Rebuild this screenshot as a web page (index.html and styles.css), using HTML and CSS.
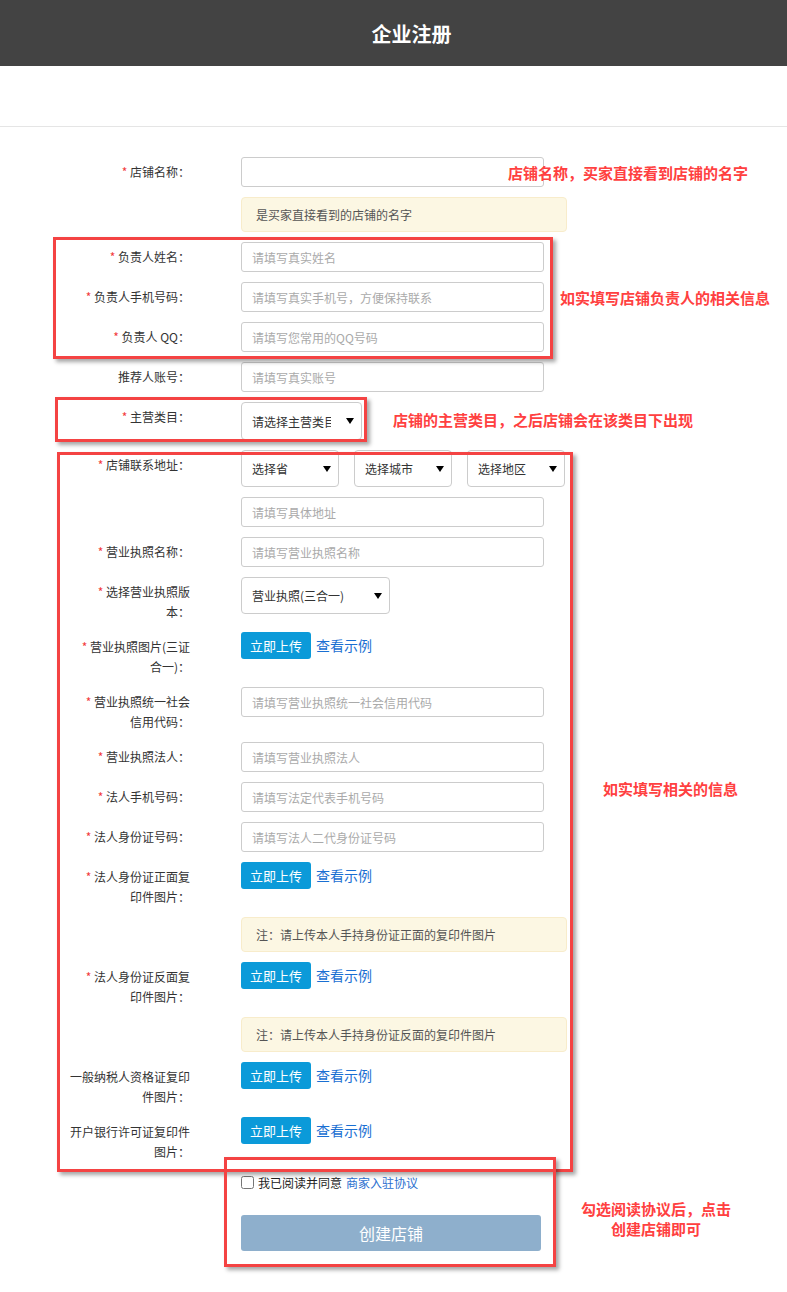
FILE: index.html
```html
<!DOCTYPE html>
<html lang="zh-CN">
	<head>
		<meta charset="UTF-8" />
		<meta name="viewport" content="width=device-width, initial-scale=1.0" />
		<title>企业注册</title>
		<link rel="stylesheet" href="styles.css">
	</head>
	<body>
		<div class="page">
			<header class="top-bar">
				<h1>企业注册</h1>
			</header>
			<div class="sub-bar"></div>

			<form class="reg-form">
				<div class="form-row">
					<label class="form-label"><i>*</i> 店铺名称：</label>
					<div class="form-field"><input type="text" class="text-input"></div>
				</div>
				<div class="form-row">
					<span class="form-label"></span>
					<div class="form-field"><div class="tip tip-wide">是买家直接看到的店铺的名字</div></div>
				</div>
				<div class="form-row">
					<label class="form-label"><i>*</i> 负责人姓名：</label>
					<div class="form-field"><input type="text" class="text-input" placeholder="请填写真实姓名"></div>
				</div>
				<div class="form-row">
					<label class="form-label"><i>*</i> 负责人手机号码：</label>
					<div class="form-field"><input type="text" class="text-input" placeholder="请填写真实手机号，方便保持联系"></div>
				</div>
				<div class="form-row">
					<label class="form-label"><i>*</i> 负责人 QQ：</label>
					<div class="form-field"><input type="text" class="text-input" placeholder="请填写您常用的QQ号码"></div>
				</div>
				<div class="form-row">
					<label class="form-label">推荐人账号：</label>
					<div class="form-field"><input type="text" class="text-input" placeholder="请填写真实账号"></div>
				</div>
				<div class="form-row">
					<label class="form-label"><i>*</i> 主营类目：</label>
					<div class="form-field">
						<span class="select-wrap"><select class="select select-category"><option>请选择主营类目</option></select></span>
					</div>
				</div>
				<div class="form-row">
					<label class="form-label"><i>*</i> 店铺联系地址：</label>
					<div class="form-field select-group">
						<span class="select-wrap"><select class="select select-area"><option>选择省</option></select></span>
						<span class="select-wrap"><select class="select select-area"><option>选择城市</option></select></span>
						<span class="select-wrap"><select class="select select-area"><option>选择地区</option></select></span>
					</div>
				</div>
				<div class="form-row">
					<span class="form-label"></span>
					<div class="form-field"><input type="text" class="text-input" placeholder="请填写具体地址"></div>
				</div>
				<div class="form-row">
					<label class="form-label"><i>*</i> 营业执照名称：</label>
					<div class="form-field"><input type="text" class="text-input" placeholder="请填写营业执照名称"></div>
				</div>
				<div class="form-row">
					<label class="form-label"><i>*</i> 选择营业执照版<br>本：</label>
					<div class="form-field">
						<span class="select-wrap"><select class="select select-license"><option>营业执照(三合一)</option></select></span>
					</div>
				</div>
				<div class="form-row">
					<label class="form-label"><i>*</i> 营业执照图片(三证<br>合一)：</label>
					<div class="form-field upload">
						<button type="button" class="btn-upload">立即上传</button>
						<a href="#" class="link">查看示例</a>
					</div>
				</div>
				<div class="form-row">
					<label class="form-label"><i>*</i> 营业执照统一社会<br>信用代码：</label>
					<div class="form-field"><input type="text" class="text-input" placeholder="请填写营业执照统一社会信用代码"></div>
				</div>
				<div class="form-row">
					<label class="form-label"><i>*</i> 营业执照法人：</label>
					<div class="form-field"><input type="text" class="text-input" placeholder="请填写营业执照法人"></div>
				</div>
				<div class="form-row">
					<label class="form-label"><i>*</i> 法人手机号码：</label>
					<div class="form-field"><input type="text" class="text-input" placeholder="请填写法定代表手机号码"></div>
				</div>
				<div class="form-row">
					<label class="form-label"><i>*</i> 法人身份证号码：</label>
					<div class="form-field"><input type="text" class="text-input" placeholder="请填写法人二代身份证号码"></div>
				</div>
				<div class="form-row">
					<label class="form-label"><i>*</i> 法人身份证正面复<br>印件图片：</label>
					<div class="form-field upload">
						<button type="button" class="btn-upload">立即上传</button>
						<a href="#" class="link">查看示例</a>
					</div>
				</div>
				<div class="form-row">
					<span class="form-label"></span>
					<div class="form-field"><div class="tip tip-wide">注：请上传本人手持身份证正面的复印件图片</div></div>
				</div>
				<div class="form-row">
					<label class="form-label"><i>*</i> 法人身份证反面复<br>印件图片：</label>
					<div class="form-field upload">
						<button type="button" class="btn-upload">立即上传</button>
						<a href="#" class="link">查看示例</a>
					</div>
				</div>
				<div class="form-row">
					<span class="form-label"></span>
					<div class="form-field"><div class="tip tip-wide">注：请上传本人手持身份证反面的复印件图片</div></div>
				</div>
				<div class="form-row">
					<label class="form-label">一般纳税人资格证复印<br>件图片：</label>
					<div class="form-field upload">
						<button type="button" class="btn-upload">立即上传</button>
						<a href="#" class="link">查看示例</a>
					</div>
				</div>
				<div class="form-row">
					<label class="form-label">开户银行许可证复印件<br>图片：</label>
					<div class="form-field upload">
						<button type="button" class="btn-upload">立即上传</button>
						<a href="#" class="link">查看示例</a>
					</div>
				</div>

				<div class="agree">
					<input type="checkbox" class="agree-check">
					<span>我已阅读并同意</span>
					<a href="#" class="link-agree">商家入驻协议</a>
				</div>
				<button type="button" class="btn-submit">创建店铺</button>
			</form>

			<!-- 标注 -->
			<div class="mark mark-leader"></div>
			<div class="mark mark-category"></div>
			<div class="mark mark-info"></div>
			<div class="mark mark-submit"></div>

			<p class="note note-name">店铺名称，买家直接看到店铺的名字</p>
			<p class="note note-leader">如实填写店铺负责人的相关信息</p>
			<p class="note note-category">店铺的主营类目，之后店铺会在该类目下出现</p>
			<p class="note note-info">如实填写相关的信息</p>
			<p class="note note-submit">勾选阅读协议后，点击<br>创建店铺即可</p>
		</div>
	</body>
</html>
```

FILE: styles.css
```css
body {
	margin: 0;
	font-family: "Noto Sans CJK SC", "Liberation Sans", sans-serif;
	font-size: 12px;
	color: #333;
	background-color: #fff;
}

.page {
	position: relative;
	width: 787px;
	height: 1292px;
	overflow: hidden;
}

.top-bar {
	height: 66px;
	background-color: #434343;
	display: flex;
	align-items: center;
	justify-content: center;
}

.top-bar h1 {
	margin: 0;
	padding-left: 36px;
	color: #fff;
	font-size: 20px;
	font-weight: bold;
}

.sub-bar {
	height: 60px;
	border-bottom: 1px solid #e5e5e5;
}

/* 表单 */
.reg-form {
	padding-top: 30px;
}

.form-row {
	display: flex;
	margin-bottom: 10px;
}

.form-label {
	width: 120px;
	margin-left: 70px;
	padding-top: 5px;
	line-height: 20px;
	text-align: right;
	color: #333;
}

.form-label i {
	font-style: normal;
	color: #f23b3b;
}

.form-field {
	margin-left: 51px;
}

.text-input {
	box-sizing: border-box;
	width: 303px;
	height: 30px;
	margin: 0;
	padding: 0 10px;
	border: 1px solid #ccc;
	border-radius: 3px;
	font-family: inherit;
	font-size: 12px;
	color: #333;
	outline: none;
}

.text-input::placeholder {
	color: #aaa;
}

.tip {
	box-sizing: border-box;
	height: 35px;
	padding: 7px 14px 6px;
	line-height: 20px;
	background-color: #fcf7e3;
	border: 1px solid #f8eccb;
	border-radius: 4px;
	color: #555;
}

.tip-wide {
	width: 326px;
}

/* 下拉框 */
.select-group {
	display: flex;
	gap: 15px;
}

.select-wrap {
	position: relative;
	display: inline-block;
}

.select-wrap::after {
	content: "";
	position: absolute;
	right: 8px;
	top: 50%;
	margin-top: -3px;
	border-left: 4px solid transparent;
	border-right: 4px solid transparent;
	border-top: 6px solid #000;
	pointer-events: none;
}

.select {
	appearance: none;
	-webkit-appearance: none;
	box-sizing: border-box;
	height: 38px;
	margin: 0;
	padding: 0 30px 0 10px;
	border: 1px solid #ccc;
	border-radius: 4px;
	background-color: #fff;
	font-family: inherit;
	font-size: 12px;
	color: #333;
	outline: none;
}

.select-category {
	width: 121px;
	height: 38px;
}

.select-area {
	width: 98px;
	height: 37px;
}

.select-license {
	width: 149px;
	height: 37px;
}

/* 上传 */
.upload {
	display: flex;
	align-items: flex-start;
	gap: 5px;
}

.btn-upload {
	width: 70px;
	height: 27px;
	padding: 0;
	border: none;
	border-radius: 3px;
	background-color: #0b9ad9;
	color: #fff;
	font-family: inherit;
	font-size: 13px;
	cursor: pointer;
}

.link {
	line-height: 27px;
	font-size: 14px;
	color: #1a6fd2;
	text-decoration: none;
}

/* 协议与提交 */
.agree {
	display: flex;
	align-items: center;
	gap: 4px;
	height: 20px;
	margin-left: 241px;
	color: #222;
}

.agree-check {
	width: 13px;
	height: 13px;
	margin: 0;
}

.link-agree {
	color: #2a6fd0;
	text-decoration: none;
}

.btn-submit {
	display: block;
	width: 300px;
	height: 36px;
	margin: 23px 0 0 241px;
	padding: 0;
	border: none;
	border-radius: 3px;
	background-color: #8eafcc;
	color: #fff;
	font-family: inherit;
	font-size: 16px;
	cursor: pointer;
}

/* 标注框与说明文字 */
.mark {
	position: absolute;
	box-sizing: border-box;
	border: 3px solid #f44343;
	box-shadow: 3px 3px 4px rgba(0, 0, 0, 0.35);
}

.mark-leader {
	left: 53px;
	top: 237px;
	width: 500px;
	height: 122px;
}

.mark-category {
	left: 55px;
	top: 397px;
	width: 312px;
	height: 45px;
}

.mark-info {
	left: 57px;
	top: 452px;
	width: 516px;
	height: 720px;
}

.mark-submit {
	left: 224px;
	top: 1157px;
	width: 332px;
	height: 110px;
}

.note {
	position: absolute;
	margin: 0;
	font-size: 15px;
	line-height: 20px;
	font-weight: bold;
	color: #ff4040;
	white-space: nowrap;
}

.note-name {
	left: 508px;
	top: 163px;
}

.note-leader {
	left: 560px;
	top: 288px;
}

.note-category {
	left: 393px;
	top: 410px;
}

.note-info {
	left: 603px;
	top: 779px;
}

.note-submit {
	left: 581px;
	top: 1199px;
	width: 150px;
	text-align: center;
}
```
